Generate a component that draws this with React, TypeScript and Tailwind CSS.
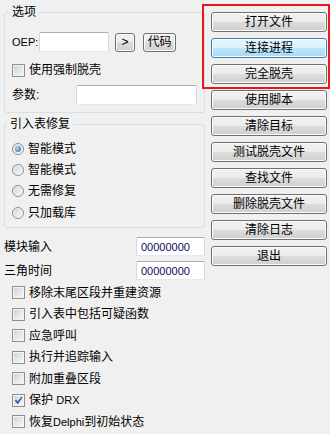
import type { ReactNode } from "react";
import clsx from "clsx";

function Btn({
	children,
	focused,
	className,
}: {
	children: ReactNode;
	focused?: boolean;
	className?: string;
}) {
	return (
		<button
			type="button"
			className={clsx(
				"flex items-center justify-center rounded-[3px] border text-[12px] leading-none text-black shadow-[inset_0_0_0_1px_#fcfcfc]",
				focused
					? "border-[#3c7fb1] bg-[linear-gradient(#eaf6fd_0%,#d9f0fc_50%,#bee6fd_50%,#a7d9f5_100%)]"
					: "border-[#707070] bg-[linear-gradient(#f2f2f2_0%,#ebebeb_50%,#dddddd_50%,#cfcfcf_100%)]",
				className,
			)}
		>
			{children}
		</button>
	);
}

function Field({ value, className }: { value?: string; className?: string }) {
	return (
		<input
			readOnly
			value={value ?? ""}
			className={clsx(
				"rounded-[2px] border border-[#abadb3] border-x-[#d5d9e0] border-b-[#e3e9ef] bg-white px-[4px] text-[11px] text-[#0c0c5c] outline-none",
				className,
			)}
		/>
	);
}

function Check({ checked }: { checked?: boolean }) {
	return (
		<span className="flex h-[13px] w-[13px] shrink-0 items-center justify-center border border-[#8e8f8f] bg-[linear-gradient(135deg,#d0d0d0,#fafafa)] shadow-[inset_0_0_0_1px_#f4f4f4]">
			{checked && (
				<svg width="9" height="9" viewBox="0 0 9 9">
					<path
						d="M0.8 4.6 L2.2 3.6 L3.6 5.6 L7.6 0.6 L8.4 1.4 L3.8 8.2 Z"
						fill="#2a52b0"
					/>
				</svg>
			)}
		</span>
	);
}

function Radio({ checked, label }: { checked?: boolean; label: string }) {
	return (
		<div className="flex h-[21.3px] items-center gap-[4px]">
			<span className="flex h-[12px] w-[12px] shrink-0 items-center justify-center rounded-full border border-[#8e8f8f] bg-[linear-gradient(135deg,#d2d2d2,#fbfbfb)] shadow-[inset_0_0_0_1px_#f6f6f6]">
				{checked && (
					<span className="h-[6px] w-[6px] rounded-full bg-[radial-gradient(circle_at_35%_35%,#a8dcf8,#1a64a8)]" />
				)}
			</span>
			<span>{label}</span>
		</div>
	);
}

function CheckRow({ label, checked }: { label: ReactNode; checked?: boolean }) {
	return (
		<div className="flex h-[21.5px] items-center gap-[4px]">
			<Check checked={checked} />
			<span>{label}</span>
		</div>
	);
}

const options: { label: ReactNode; checked?: boolean }[] = [
	{ label: "移除末尾区段并重建资源" },
	{ label: "引入表中包括可疑函数" },
	{ label: "应急呼叫" },
	{ label: "执行并追踪输入" },
	{ label: "附加重叠区段" },
	{
		label: (
			<>
				保护 <span className="text-[11px]">DRX</span>
			</>
		),
		checked: true,
	},
	{
		label: (
			<>
				恢复<span className="text-[11px]">Delphi</span>到初始状态
			</>
		),
	},
];

const buttons = ["使用脚本", "清除目标", "测试脱壳文件", "查找文件", "删除脱壳文件", "清除日志", "退出"];

export default function App() {
	return (
		<div className="flex h-[434px] w-[330px] overflow-hidden bg-[#f0f0f0] font-['Liberation_Sans','Noto_Sans_CJK_SC',sans-serif] text-[12px] leading-none text-black">
			<div className="flex w-[206px] shrink-0 flex-col">
				<fieldset className="ml-[4px] mt-[5px] w-[201px] min-w-0 rounded-[3px] border border-[#d5dfe5] px-[7px] pb-[7px]">
					<legend className="-ml-[3px] px-[3px] leading-[14px]">选项</legend>
					<div className="mt-[13px] flex h-[20px] items-center">
						<span className="w-[27px] text-[11px]">OEP:</span>
						<Field className="h-[20px] w-[70px]" />
						<Btn className="ml-[6px] h-[19px] w-[20px] text-[11px]">&gt;</Btn>
						<Btn className="ml-[8px] h-[19px] w-[33px]">代码</Btn>
					</div>
					<div className="mt-[11px] flex h-[14px] items-center gap-[4px]">
						<Check />
						<span>使用强制脱壳</span>
					</div>
					<div className="mt-[8px] flex h-[20px] items-center">
						<span className="w-[64px]">参数:</span>
						<Field className="h-[20px] min-w-0 flex-1" />
					</div>
				</fieldset>

				<fieldset className="ml-[4px] mt-[4px] w-[201px] min-w-0 rounded-[3px] border border-[#d5dfe5] px-[7px] pb-[4px]">
					<legend className="-ml-[5px] px-[3px] leading-[14px]">引入表修复</legend>
					<div className="mt-[7px] flex flex-col">
						<Radio checked label="智能模式" />
						<Radio label="智能模式" />
						<Radio label="无需修复" />
						<Radio label="只加载库" />
					</div>
				</fieldset>

				<div className="mt-[9px] flex h-[19px] items-center">
					<span className="w-[136px] pl-[4px]">模块输入</span>
					<Field value="00000000" className="h-[19px] w-[69px]" />
				</div>
				<div className="mt-[5px] flex h-[19px] items-center">
					<span className="w-[136px] pl-[4px]">三角时间</span>
					<Field value="00000000" className="h-[19px] w-[69px]" />
				</div>

				<div className="mt-[2px] flex flex-col pl-[12px]">
					{options.map((o, i) => (
						<CheckRow key={i} label={o.label} checked={o.checked} />
					))}
				</div>
			</div>

			<div className="flex flex-col">
				<div className="-ml-[4px] mt-[4px] flex w-[128px] flex-col gap-[6px] border-2 border-[#e8161e] pb-[3px] pl-[7px] pt-[6px]">
					<Btn className="h-[20px] w-[116px]">打开文件</Btn>
					<Btn focused className="h-[20px] w-[116px]">
						连接进程
					</Btn>
					<Btn className="h-[20px] w-[116px]">完全脱壳</Btn>
				</div>
				<div className="ml-[5px] mt-[1px] flex flex-col gap-[6px]">
					{buttons.map((b) => (
						<Btn key={b} className="h-[20px] w-[116px]">
							{b}
						</Btn>
					))}
				</div>
			</div>
		</div>
	);
}
